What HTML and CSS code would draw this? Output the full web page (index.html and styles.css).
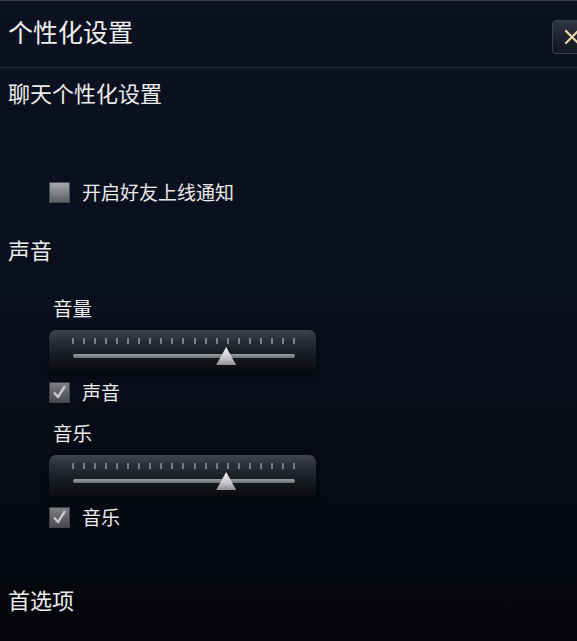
FILE: index.html
```html
<!DOCTYPE html>
<html lang="zh-CN">
<head>
<meta charset="utf-8">
<title>个性化设置</title>
<link rel="stylesheet" href="styles.css">
</head>
<body>
<div class="panel">
  <header class="header">
    <h1 class="title">个性化设置</h1>
    <button class="close" type="button">
      <svg width="20" height="20" viewBox="0 0 20 20"><path d="M4 4 L16 16 M16 4 L4 16" stroke="#e6d7a6" stroke-width="2.2" stroke-linecap="round"/></svg>
    </button>
  </header>

  <section class="section chat">
    <h2 class="heading">聊天个性化设置</h2>
    <label class="check-row notify">
      <span class="box"></span>
      <span class="check-text">开启好友上线通知</span>
    </label>
  </section>

  <section class="section sound">
    <h2 class="heading">声音</h2>
    <div class="sub-label vol-label">音量</div>
    <div class="slider">
      <div class="ticks">
        <i></i><i></i><i></i><i></i><i></i><i></i><i></i><i></i><i></i><i></i><i></i><i></i><i></i><i></i><i></i><i></i><i></i><i></i><i></i><i></i><i></i>
      </div>
      <div class="track"><span class="thumb" style="left: 69%"></span></div>
    </div>
    <label class="check-row after-slider">
      <span class="box checked"><svg width="21" height="21" viewBox="0 0 21 21"><path d="M5 10.5 L9 15 L16 4" fill="none" stroke="#c9c9cd" stroke-width="2.4" stroke-linejoin="round"/></svg></span>
      <span class="check-text">声音</span>
    </label>
    <div class="sub-label music-label">音乐</div>
    <div class="slider">
      <div class="ticks">
        <i></i><i></i><i></i><i></i><i></i><i></i><i></i><i></i><i></i><i></i><i></i><i></i><i></i><i></i><i></i><i></i><i></i><i></i><i></i><i></i><i></i>
      </div>
      <div class="track"><span class="thumb" style="left: 69%"></span></div>
    </div>
    <label class="check-row after-slider">
      <span class="box checked"><svg width="21" height="21" viewBox="0 0 21 21"><path d="M5 10.5 L9 15 L16 4" fill="none" stroke="#c9c9cd" stroke-width="2.4" stroke-linejoin="round"/></svg></span>
      <span class="check-text">音乐</span>
    </label>
  </section>

  <section class="section prefs">
    <h2 class="heading">首选项</h2>
  </section>
</div>
</body>
</html>
```

FILE: styles.css
```css
html, body {
  margin: 0;
  padding: 0;
  width: 577px;
  height: 641px;
  overflow: hidden;
}

body {
  background: linear-gradient(180deg, #0c1121 0%, #0a0f1d 45%, #070912 80%, #05060b 100%);
  color: #ececec;
  font-family: "Noto Sans CJK SC", "Noto Sans", sans-serif;
}

.panel {
  height: 641px;
  border-top: 1px solid #3b3f4a;
  box-sizing: border-box;
}

.header {
  height: 66px;
  display: flex;
  align-items: center;
  justify-content: space-between;
  border-bottom: 1px solid #232a3a;
}

.title {
  margin: 0 0 6px 8px;
  font-size: 25px;
  font-weight: 400;
  line-height: 34px;
  color: #f0f0f0;
}

.close {
  width: 40px;
  height: 34px;
  margin: 6px -15px 0 0;
  padding: 0;
  border: 1px solid #3a404c;
  border-radius: 4px;
  background: linear-gradient(180deg, #2f3542 0%, #1a1f2b 60%, #141822 100%);
  display: flex;
  align-items: center;
  justify-content: center;
}

.section {
  display: flex;
  flex-direction: column;
  padding-left: 8px;
}

.heading {
  margin: 0;
  font-size: 22px;
  font-weight: 400;
  line-height: 30px;
  color: #ececec;
}

.chat {
  padding-top: 9px;
}

.check-row {
  display: flex;
  align-items: center;
  gap: 12px;
  height: 24px;
  margin-left: 41px;
}

.notify {
  margin-top: 73px;
}

.box {
  width: 21px;
  height: 21px;
  box-sizing: border-box;
  border: 1px solid #4a4c52;
  background: linear-gradient(180deg, #a8a9ad 0%, #85868b 45%, #5d5e63 100%);
  display: block;
  flex: none;
}

.box.checked {
  background: linear-gradient(180deg, #7e7f84 0%, #626368 50%, #4a4b50 100%);
  border-color: #3e4046;
}

.box svg {
  display: block;
  margin: -1px;
}

.check-text {
  font-size: 19px;
  line-height: 24px;
  color: #ececec;
}

.sound {
  margin-top: 30px;
}

.sub-label {
  margin-left: 45px;
  font-size: 19.5px;
  line-height: 24px;
  color: #ececec;
}

.vol-label {
  margin-top: 32px;
}

.music-label {
  margin-top: 17px;
}

.slider {
  position: relative;
  width: 267px;
  height: 42px;
  margin: 10px 0 0 41px;
  border-radius: 7px 7px 3px 3px;
  background: linear-gradient(180deg, #41444c 0%, #2a2d35 25%, #16181f 65%, #090b10 100%);
  box-shadow: 0 3px 6px rgba(0, 0, 0, 0.5);
}

.ticks {
  position: absolute;
  left: 23px;
  top: 8px;
  width: 223px;
  height: 6px;
  display: flex;
  justify-content: space-between;
}

.ticks i {
  display: block;
  width: 2px;
  height: 6px;
  background: #7b7e86;
}

.track {
  position: absolute;
  left: 24px;
  top: 24px;
  width: 222px;
  height: 4px;
  border-radius: 2px;
  background: linear-gradient(180deg, #9a9ca2 0%, #6d7076 100%);
}

.thumb {
  position: absolute;
  top: -7px;
  width: 20px;
  height: 18px;
  margin-left: -10px;
  background: linear-gradient(180deg, #f2f2f2 0%, #c6c7ca 60%, #8e9095 100%);
  clip-path: polygon(50% 0, 100% 100%, 0 100%);
}

.after-slider {
  margin-top: 8px;
}

.prefs {
  margin-top: 55px;
}
```
